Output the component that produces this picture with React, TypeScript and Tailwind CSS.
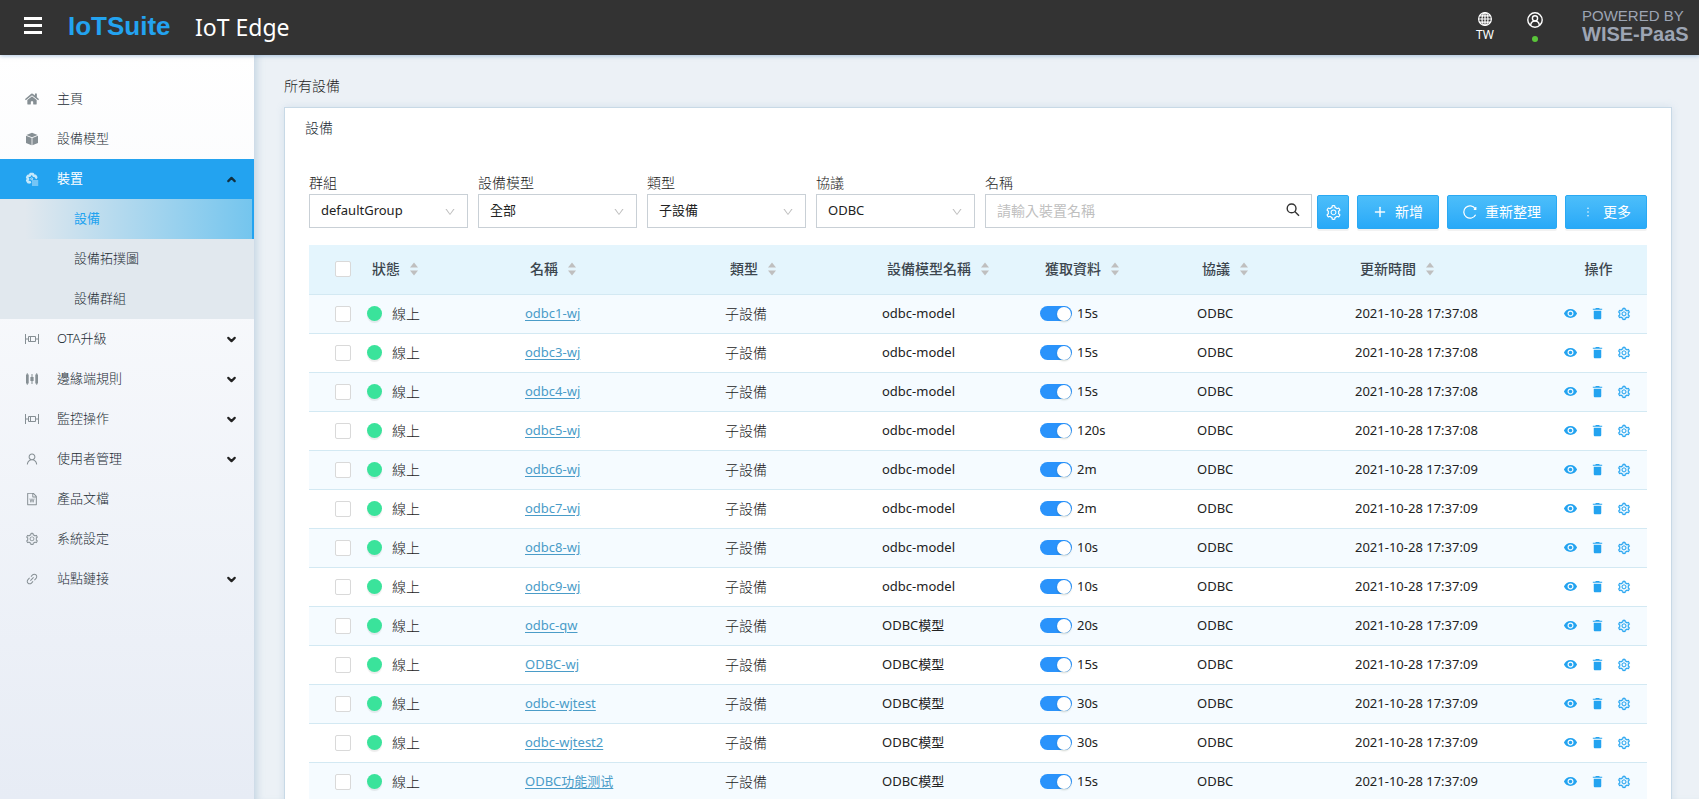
import { useState } from "react";
import type { ReactNode } from "react";
import clsx from "clsx";
import {
  AiOutlineDown,
  AiOutlineFileWord,
  AiOutlineLink,
  AiOutlineMore,
  AiOutlinePlus,
  AiOutlineSetting,
  AiOutlineUser,
} from "react-icons/ai";
import { FaHome } from "react-icons/fa";
import { FiChevronDown, FiChevronUp } from "react-icons/fi";
import { IoMdEye, IoMdTrash } from "react-icons/io";

interface Device {
  name: string;
  model: string;
  interval: string;
  updated: string;
}

interface MenuEntry {
  label: string;
  icon: ReactNode;
  children?: string[];
}

const GatewayIcon = () => (
  <svg viewBox="0 0 14 14" className="size-[14px]" fill="none" stroke="currentColor">
    <path d="M.5 2v10M13.5 2v10M.5 7h3M10.5 7h3M3.5 4.500h7v5h-7zM5.500 4.500v5" />
  </svg>
);

const SlidersIcon = () => (
  <svg viewBox="0 0 14 14" className="size-[14px]" fill="currentColor">
    <path d="M1 2.500h.8v-1.200h1v1.200h.9v9h-.9v1.200h-1v-1.200H1zM10.300 2.500h.9v-1.200h1v1.200h.8v9h-.8v1.200h-1v-1.200h-.9z" />
    <path d="M6.500 2h1v3h1.100v4H7.500v3h-1V9H5.400V5h1.100z" />
  </svg>
);

const CubeIcon = () => (
  <svg viewBox="0 0 14 14" className="size-[14px]" fill="currentColor">
    <path d="M7 .8 12.600 3 7 5.200 1.400 3z" />
    <path d="M1 3.800 6.600 6v7.300L1 10.900zM13 3.800 7.400 6v7.300l5.600-2.400z" />
  </svg>
);

const DeviceIcon = () => (
  <svg viewBox="0 0 14 14" className="size-[14px]" fill="none" stroke="currentColor">
    <path
      strokeWidth="2.400"
      strokeLinejoin="round"
      d="M5.200 11.300 4.800 10l-1.700.2-1-1.700L3.200 7 2.100 5.300l1-1.700 1.700.2L5.500 2h2.400l.7 1.800 1.700-.2 1 1.700-.8 1.200"
    />
    <circle cx="6.700" cy="6.800" r="1" />
    <path strokeWidth="1.200" d="M7 9h6.200M7 11h6.200M7 13h6.200" />
  </svg>
);

const GlobeIcon = () => (
  <svg viewBox="0 0 16 16" className="size-4" fill="none" stroke="currentColor" strokeWidth="1.200">
    <circle cx="8" cy="8" r="6.400" />
    <ellipse cx="8" cy="8" rx="3" ry="6.400" />
    <path d="M8 1.500v13M1.600 8h12.800M2.500 4.800h11M2.500 11.200h11" />
  </svg>
);

const AccountIcon = () => (
  <svg viewBox="0 0 16 16" className="size-4" fill="none" stroke="currentColor" strokeWidth="1.400">
    <circle cx="8" cy="8" r="7.200" />
    <circle cx="8" cy="6.300" r="2.600" />
    <path d="M3.600 13c.5-2.500 2.200-4 4.400-4s3.900 1.500 4.400 4" />
  </svg>
);

const RefreshIcon = () => (
  <svg viewBox="0 0 14 14" className="size-[14px]" fill="none" stroke="currentColor" strokeWidth="1.200">
    <path d="M12.600 9.700A6.200 6.200 0 1 1 12.200 3.600M12.800 2v2.300h-2" />
  </svg>
);

const SearchIcon = () => (
  <svg viewBox="0 0 14 14" className="size-[14px]" fill="none" stroke="currentColor" strokeWidth="1.400">
    <circle cx="5.600" cy="5.400" r="4.400" />
    <path d="m8.800 8.600 4.200 4.200" />
  </svg>
);

const SortIcon = () => (
  <svg viewBox="0 0 8 14" className="h-[14px] w-2 shrink-0" fill="#bfbfbf">
    <path d="M4 .5 8 5.500H0zM4 13.500 0 8.500h8z" />
  </svg>
);

const menu: MenuEntry[] = [
  { label: "主頁", icon: <FaHome size={14} /> },
  { label: "設備模型", icon: <CubeIcon /> },
  { label: "裝置", icon: <DeviceIcon />, children: ["設備", "設備拓撲圖", "設備群組"] },
  { label: "OTA升級", icon: <GatewayIcon />, children: [] },
  { label: "邊緣端規則", icon: <SlidersIcon />, children: [] },
  { label: "監控操作", icon: <GatewayIcon />, children: [] },
  { label: "使用者管理", icon: <AiOutlineUser size={14} />, children: [] },
  { label: "產品文檔", icon: <AiOutlineFileWord size={14} /> },
  { label: "系統設定", icon: <AiOutlineSetting size={14} /> },
  { label: "站點鏈接", icon: <AiOutlineLink size={14} />, children: [] },
];

const filters = [
  { id: "group", label: "群組", value: "defaultGroup" },
  { id: "model", label: "設備模型", value: "全部" },
  { id: "kind", label: "類型", value: "子設備" },
  { id: "protocol", label: "協議", value: "ODBC" },
];

const devices: Device[] = [
  { name: "odbc1-wj", model: "odbc-model", interval: "15s", updated: "2021-10-28 17:37:08" },
  { name: "odbc3-wj", model: "odbc-model", interval: "15s", updated: "2021-10-28 17:37:08" },
  { name: "odbc4-wj", model: "odbc-model", interval: "15s", updated: "2021-10-28 17:37:08" },
  { name: "odbc5-wj", model: "odbc-model", interval: "120s", updated: "2021-10-28 17:37:08" },
  { name: "odbc6-wj", model: "odbc-model", interval: "2m", updated: "2021-10-28 17:37:09" },
  { name: "odbc7-wj", model: "odbc-model", interval: "2m", updated: "2021-10-28 17:37:09" },
  { name: "odbc8-wj", model: "odbc-model", interval: "10s", updated: "2021-10-28 17:37:09" },
  { name: "odbc9-wj", model: "odbc-model", interval: "10s", updated: "2021-10-28 17:37:09" },
  { name: "odbc-qw", model: "ODBC模型", interval: "20s", updated: "2021-10-28 17:37:09" },
  { name: "ODBC-wj", model: "ODBC模型", interval: "15s", updated: "2021-10-28 17:37:09" },
  { name: "odbc-wjtest", model: "ODBC模型", interval: "30s", updated: "2021-10-28 17:37:09" },
  { name: "odbc-wjtest2", model: "ODBC模型", interval: "30s", updated: "2021-10-28 17:37:09" },
  { name: "ODBC功能测试", model: "ODBC模型", interval: "15s", updated: "2021-10-28 17:37:09" },
];

const columns = ["狀態", "名稱", "類型", "設備模型名稱", "獲取資料", "協議", "更新時間"];

const checkboxClass =
  "block size-4 appearance-none rounded-xs border border-[#d9d9d9] bg-white checked:border-[#23a3f0] checked:bg-[#23a3f0]";

const buttonClass =
  "flex h-[34px] items-center justify-center rounded-xs border border-[#2aa9f3] bg-linear-to-b from-[#4cbefa] to-[#27a9f8] text-sm text-white shadow-[0_2px_0_rgba(0,0,0,0.05)]";

function Header() {
  return (
    <header className="relative z-10 flex h-[55px] shrink-0 items-center bg-[#333] text-white shadow-[0_1px_4px_rgba(120,160,205,0.6)]">
      <button type="button" aria-label="Menu" className="ml-6 flex w-[18px] flex-col gap-1 pb-1">
        <span className="h-[3px] w-full bg-white" />
        <span className="h-[3px] w-full bg-white" />
        <span className="h-[3px] w-full bg-white" />
      </button>
      <a
        href="#"
        className="ml-[26px] w-[104px] whitespace-nowrap pb-1 font-['Liberation_Sans',sans-serif] text-[26px] leading-8 font-bold text-[#23a3f0]"
      >
        IoTSuite
      </a>
      <span className="ml-[23px] pb-[2px] text-[23px] leading-8">IoT Edge</span>
      <button type="button" className="ml-auto flex w-8 flex-col items-center pb-[2px] text-xs leading-4">
        <GlobeIcon />
        TW
      </button>
      <button type="button" aria-label="Account" className="ml-[18px] flex w-8 flex-col items-center gap-2 pb-[2px]">
        <AccountIcon />
        <span className="size-[6px] rounded-full bg-[#5ac53a]" />
      </button>
      <div className="mr-3 ml-[31px] flex w-[105px] flex-col whitespace-nowrap pb-1 font-['Liberation_Sans',sans-serif] text-[#9da5b4]">
        <span className="text-[15px] leading-4">POWERED BY</span>
        <span className="text-[20px] leading-5 font-bold">WISE-PaaS</span>
      </div>
    </header>
  );
}

function Sidebar() {
  const [open, setOpen] = useState("裝置");

  return (
    <nav className="w-[254px] shrink-0 bg-linear-to-b from-white to-[#e7ecf5] pt-6 text-[13px] font-light text-[#222c34]">
      {menu.map((item) => {
        const active = open === item.label;
        return (
          <div key={item.label}>
            <button
              type="button"
              onClick={() => item.children && setOpen(active ? "" : item.label)}
              className={clsx(
                "flex h-10 w-full items-center pr-4 pl-[25px] text-left",
                active && "bg-[#23a3f0] font-normal text-white"
              )}
            >
              <span className={clsx("flex w-8", active ? "text-[#c5e8fb]" : "text-[#868f94]")}>{item.icon}</span>
              {item.label}
              {item.children &&
                (active ? (
                  <FiChevronUp size={13} strokeWidth={4} className="ml-auto text-[#12303f]" />
                ) : (
                  <FiChevronDown size={13} strokeWidth={4} className="ml-auto text-[#222]" />
                ))}
            </button>
            {active && item.children && (
              <div className="bg-[#e1e8ee]">
                {item.children.map((child, i) => (
                  <a
                    key={child}
                    href="#"
                    className={clsx(
                      "flex h-10 items-center pl-[74px]",
                      i === 0 &&
                        "border-r-2 border-[#23a3f0] bg-linear-to-r from-transparent from-10% to-[#74c5ee] font-normal text-[#23a3f0]"
                    )}
                  >
                    {child}
                  </a>
                ))}
              </div>
            )}
          </div>
        );
      })}
    </nav>
  );
}

function FilterBar() {
  return (
    <div className="flex items-end">
      {filters.map((f) => (
        <div key={f.id} className="mr-[10px] w-[159px]">
          <label htmlFor={f.id} className="block text-sm leading-[22px] font-light">
            {f.label}
          </label>
          <div className="relative">
            <select
              id={f.id}
              defaultValue={f.value}
              className="block h-[34px] w-full appearance-none border border-[#c9d0d6] bg-white pr-8 pb-px pl-[11px] text-[13px]"
            >
              <option>{f.value}</option>
            </select>
            <AiOutlineDown size={12} className="pointer-events-none absolute top-3 right-3 text-[#bfbfbf]" />
          </div>
        </div>
      ))}
      <div className="mr-[5px] flex-1">
        <label htmlFor="name" className="block text-sm leading-[22px] font-light">
          名稱
        </label>
        <div className="relative">
          <input
            id="name"
            type="text"
            placeholder="請輸入裝置名稱"
            className="block h-[34px] w-full border border-[#c9d0d6] bg-white pr-9 pb-[2px] pl-[11px] text-sm placeholder:text-[#bfbfbf]"
          />
          <span className="pointer-events-none absolute top-[9px] right-3 text-[#333]">
            <SearchIcon />
          </span>
        </div>
      </div>
      <div className="-mb-px flex gap-2">
        <button type="button" aria-label="設定" className={clsx(buttonClass, "w-8")}>
          <AiOutlineSetting size={17} />
        </button>
        <button type="button" className={clsx(buttonClass, "w-[82px] gap-2")}>
          <AiOutlinePlus size={14} strokeWidth={30} />
          新增
        </button>
        <button type="button" className={clsx(buttonClass, "w-[110px] gap-2")}>
          <RefreshIcon />
          重新整理
        </button>
        <button type="button" className={clsx(buttonClass, "w-[82px] gap-2")}>
          <AiOutlineMore size={14} />
          更多
        </button>
      </div>
    </div>
  );
}

function DeviceTable() {
  return (
    <table className="w-full table-fixed border-collapse text-left text-[13px]">
      <colgroup>
        <col className="w-[50px]" />
        <col className="w-[158px]" />
        <col className="w-[200px]" />
        <col className="w-[157px]" />
        <col className="w-[158px]" />
        <col className="w-[157px]" />
        <col className="w-[158px]" />
        <col className="w-[203px]" />
        <col className="w-[97px]" />
      </colgroup>
      <thead>
        <tr className="h-[49px] border-b border-[#d3e9f3] bg-[#e4f5fd] text-sm text-[#3c464e]">
          <th className="pl-[26px]">
            <input type="checkbox" aria-label="全選" className={checkboxClass} />
          </th>
          {columns.map((c) => (
            <th key={c} className="pl-[13px] font-medium">
              <span className="flex items-center gap-[10px]">
                {c}
                <SortIcon />
              </span>
            </th>
          ))}
          <th className="text-center font-medium">操作</th>
        </tr>
      </thead>
      <tbody>
        {devices.map((d) => (
          <tr key={d.name} className="h-[39px] border-b border-[#d3e9f3] odd:bg-[#f5fbff]">
            <td className="pl-[26px]">
              <input type="checkbox" aria-label={d.name} className={checkboxClass} />
            </td>
            <td className="pl-2 text-sm font-light">
              <span className="flex items-center gap-[10px]">
                <span className="size-[15px] rounded-full bg-[#3ae39b] shadow-[0_2px_1px_rgba(0,0,0,0.08)]" />
                線上
              </span>
            </td>
            <td className="pl-2">
              <a href="#" className="text-[#4a9cc8] underline underline-offset-2">
                {d.name}
              </a>
            </td>
            <td className="pl-2 text-sm font-light">子設備</td>
            <td className="pl-2">{d.model}</td>
            <td className="pl-2">
              <label className="flex items-center gap-[5px]">
                <input
                  type="checkbox"
                  role="switch"
                  defaultChecked
                  className="flex h-[15px] w-8 appearance-none items-center rounded-full bg-[#bfbfbf] px-px before:size-[14px] before:rounded-full before:bg-white before:shadow-[0_1px_2px_rgba(0,35,11,0.2)] checked:justify-end checked:bg-[#2a93fb]"
                />
                {d.interval}
              </label>
            </td>
            <td className="pl-2">ODBC</td>
            <td className="pl-2">{d.updated}</td>
            <td className="pr-1">
              <span className="flex items-center justify-center gap-3 text-[#23a3f0]">
                <button type="button" aria-label="檢視">
                  <IoMdEye size={15} />
                </button>
                <button type="button" aria-label="刪除">
                  <IoMdTrash size={15} />
                </button>
                <button type="button" aria-label="設定">
                  <AiOutlineSetting size={14} strokeWidth={15} />
                </button>
              </span>
            </td>
          </tr>
        ))}
      </tbody>
    </table>
  );
}

export default function App() {
  return (
    <div className="flex h-screen flex-col overflow-hidden bg-[#ecf1f6] font-['Noto_Sans','Noto_Sans_CJK_TC',sans-serif] text-[#222]">
      <Header />
      <div className="flex min-h-0 flex-1">
        <Sidebar />
        <main className="min-w-0 flex-1 overflow-hidden pt-5 pr-[27px] pl-[30px] shadow-[inset_8px_0_8px_-6px_rgba(120,160,190,0.4)]">
          <h1 className="text-sm leading-[22px] font-light">所有設備</h1>
          <section className="mt-[10px] border border-[#c8d9e6] bg-white px-6 pb-6 shadow-[0_0_8px_rgba(120,160,200,0.2)]">
            <h2 className="-ml-1 pt-[9px] text-sm leading-[22px] font-light text-[#222c34]">設備</h2>
            <div className="mt-[33px] mb-[17px]">
              <FilterBar />
            </div>
            <DeviceTable />
          </section>
        </main>
      </div>
    </div>
  );
}
